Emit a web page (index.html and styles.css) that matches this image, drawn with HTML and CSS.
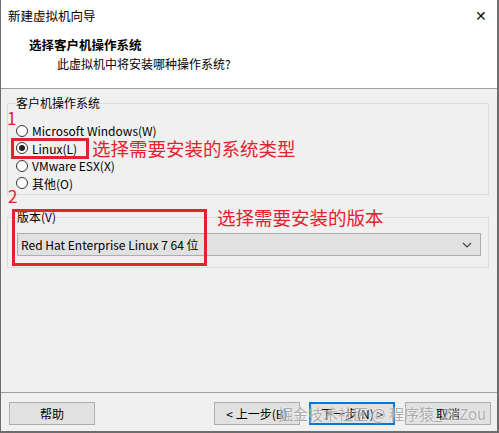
FILE: index.html
```html
<!DOCTYPE html>
<html lang="zh-CN">
  <head>
    <meta charset="UTF-8" />
    <title>新建虚拟机向导</title>
    <link rel="stylesheet" href="styles.css">
  </head>
  <body>
    <div class="window">
      <div class="top">
        <div class="titlebar">
          <span>新建虚拟机向导</span>
          <span class="close">✕</span>
        </div>
        <div class="head">
          <h1>选择客户机操作系统</h1>
          <p>此虚拟机中将安装哪种操作系统?</p>
        </div>
      </div>

      <div class="body">
        <fieldset class="group os">
          <legend>客户机操作系统</legend>
          <span class="num n1">1</span>
          <label class="radio"><i></i>Microsoft Windows(W)</label>
          <div class="row">
            <label class="radio checked mark"><i></i>Linux(L)</label>
            <span class="note">选择需要安装的系统类型</span>
          </div>
          <label class="radio"><i></i>VMware ESX(X)</label>
          <label class="radio"><i></i>其他(O)</label>
        </fieldset>

        <span class="num n2">2</span>
        <fieldset class="group ver">
          <legend>版本(V)</legend>
          <div class="select">
            <span>Red Hat Enterprise Linux 7 64 位</span>
            <svg width="10" height="6" viewBox="0 0 10 6"><path d="M1 1 L5 5 L9 1" fill="none" stroke="#444" stroke-width="1.2"/></svg>
          </div>
          <span class="mark2"></span>
          <span class="note note2">选择需要安装的版本</span>
        </fieldset>
      </div>

      <div class="footer">
        <button class="btn">帮助</button>
        <div class="nav">
          <button class="btn">&lt; 上一步(B)</button>
          <button class="btn primary">下一步(N) &gt;</button>
          <button class="btn">取消</button>
        </div>
        <span class="watermark">掘金技术社区 @ 程序猿_ZeZou</span>
      </div>
    </div>
  </body>
</html>
```

FILE: styles.css
```css
* {
  margin: 0;
  padding: 0;
  box-sizing: border-box;
}
body {
  font-family: "Noto Sans CJK SC", "Noto Sans", sans-serif;
  font-size: 12px;
  color: #000;
  background: #fff;
}
.window {
  width: 499px;
  height: 433px;
  border-left: 1px solid #6d6d6d;
  border-right: 2px solid #6d6d6d;
  border-bottom: 2px solid #6d6d6d;
  background: #f0f0f0;
  display: flex;
  flex-direction: column;
}

.top {
  background: #fff;
  height: 89px;
  flex-shrink: 0;
  border-bottom: 1px solid #a0a0a0;
}
.titlebar {
  display: flex;
  justify-content: space-between;
  align-items: center;
  height: 30px;
  padding: 0 10px 0 7px;
  font-size: 12.5px;
}
.close {
  font-size: 14px;
  color: #111;
}
.head h1 {
  font-size: 12.5px;
  font-weight: bold;
  padding-left: 28px;
  margin-top: 6px;
  line-height: 18px;
}
.head p {
  padding-left: 56px;
  line-height: 18px;
  margin-top: 1px;
}

.body {
  position: relative;
  padding: 6px 8px 0 6px;
  flex: 1;
}
.group {
  border: 1px solid #dcdcdc;
}
.group legend {
  padding: 0;
  line-height: 16px;
}
.os {
  height: 100px;
  padding: 11px 0 0 8px;
  position: relative;
}
.radio {
  display: flex;
  align-items: center;
  gap: 4px;
  height: 17.5px;
}
.radio i {
  width: 12px;
  height: 12px;
  border: 1px solid #333;
  border-radius: 50%;
  background: #fff;
  position: relative;
}
.radio.checked i::after {
  content: "";
  position: absolute;
  left: 2px;
  top: 2px;
  width: 6px;
  height: 6px;
  border-radius: 50%;
  background: #222;
}
.row {
  display: flex;
  align-items: center;
  gap: 3px;
  height: 17.5px;
}
.mark {
  border: 3px solid #e3222d;
  margin-left: -5px;
  padding: 0 9px 0 2px;
  height: 21px;
}
.note {
  color: #e3222d;
  font-size: 18.5px;
  line-height: 22px;
  white-space: nowrap;
}
.num {
  position: absolute;
  color: #e3222d;
  font-size: 17px;
  line-height: 18px;
}
.n1 {
  left: -1px;
  top: -2px;
}
.n2 {
  left: 7px;
  top: 98px;
}

.ver {
  margin-top: 14px;
  height: 59px;
  padding: 8px 7px 0 9px;
  position: relative;
}
.select {
  display: flex;
  justify-content: space-between;
  align-items: center;
  height: 23px;
  background: #e1e1e1;
  border: 1px solid #adadad;
  padding: 0 8px 0 3px;
}
.mark2 {
  position: absolute;
  left: 4px;
  top: -16px;
  width: 195px;
  height: 57px;
  border: 3px solid #e3222d;
}
.note2 {
  position: absolute;
  left: 209px;
  top: -19px;
  background: #f0f0f0;
  z-index: 3;
}

.footer {
  position: relative;
  height: 39px;
  flex-shrink: 0;
  border-top: 1px solid #a0a0a0;
  display: flex;
  justify-content: space-between;
  align-items: flex-start;
  padding: 9px 6px 0 8px;
}
.nav {
  display: flex;
  gap: 9px;
}
.btn {
  width: 86px;
  height: 23px;
  background: #e1e1e1;
  border: 1px solid #adadad;
  font-family: inherit;
  font-size: 12px;
  color: #000;
}
.primary {
  border: 2px solid #0078d7;
  margin-right: 1px;
}
.watermark {
  position: absolute;
  left: 277px;
  top: 9px;
  font-size: 15px;
  line-height: 24px;
  color: rgba(140, 140, 140, 0.7);
  text-shadow: 0 0 2px #fff;
  white-space: nowrap;
}
```
